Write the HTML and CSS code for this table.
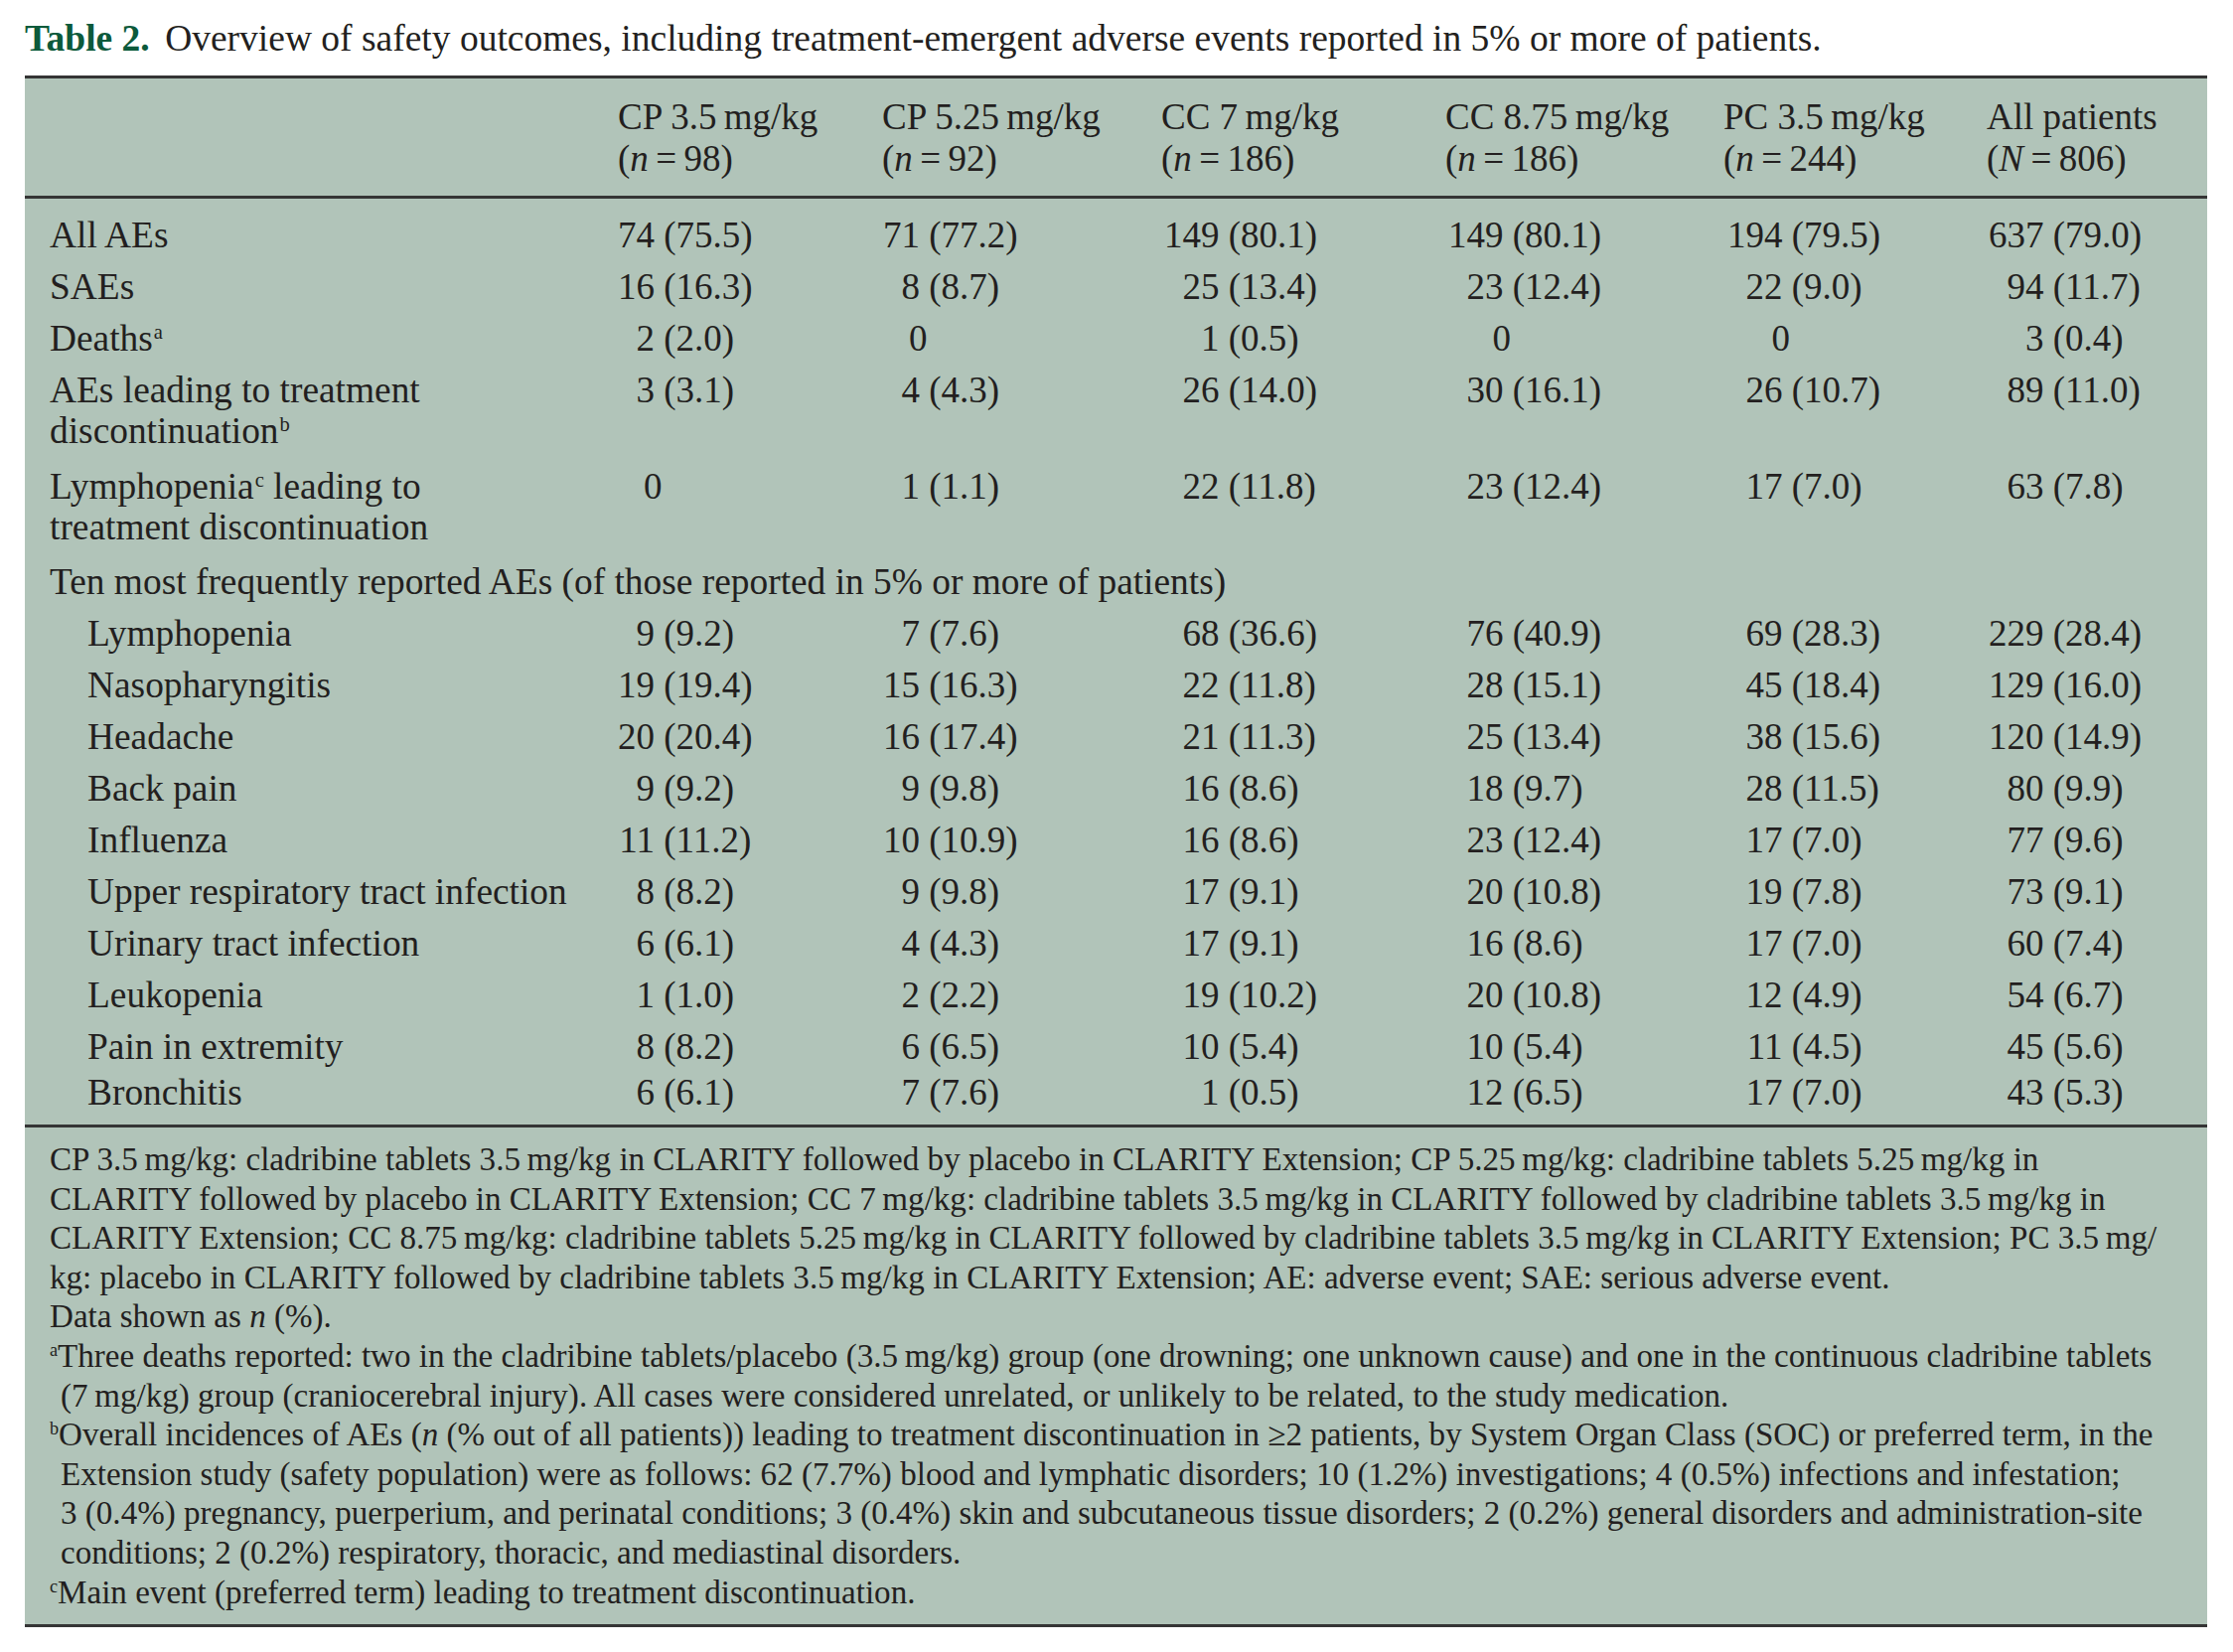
FILE: index.html
```html
<!DOCTYPE html>
<html lang="en">
<head>
<meta charset="utf-8">
<title>Table 2. Overview of safety outcomes</title>
<link rel="stylesheet" href="styles.css">
</head>
<body>
<div class="page">
  <p class="caption"><span class="label">Table 2.</span> Overview of safety outcomes, including treatment-emergent adverse events reported in 5% or more of patients.</p>
  <div class="panel">
    <table class="safety">
      <colgroup>
        <col class="col-label">
        <col class="col-cp35">
        <col class="col-cp525">
        <col class="col-cc7">
        <col class="col-cc875">
        <col class="col-pc35">
        <col class="col-all">
      </colgroup>
      <thead>
        <tr>
          <th></th>
          <th>CP 3.5&thinsp;mg/kg<br>(<i>n</i>&thinsp;=&thinsp;98)</th>
          <th>CP 5.25&thinsp;mg/kg<br>(<i>n</i>&thinsp;=&thinsp;92)</th>
          <th>CC 7&thinsp;mg/kg<br>(<i>n</i>&thinsp;=&thinsp;186)</th>
          <th>CC 8.75&thinsp;mg/kg<br>(<i>n</i>&thinsp;=&thinsp;186)</th>
          <th>PC 3.5&thinsp;mg/kg<br>(<i>n</i>&thinsp;=&thinsp;244)</th>
          <th>All patients<br>(<i>N</i>&thinsp;=&thinsp;806)</th>
        </tr>
      </thead>
      <tbody>
        <tr class="first">
          <td class="lab">All AEs</td>
          <td class="v c2"><span class="n">74</span>(75.5)</td>
          <td class="v c3"><span class="n">71</span>(77.2)</td>
          <td class="v c4"><span class="n">149</span>(80.1)</td>
          <td class="v c5"><span class="n">149</span>(80.1)</td>
          <td class="v c6"><span class="n">194</span>(79.5)</td>
          <td class="v c7"><span class="n">637</span>(79.0)</td>
        </tr>
        <tr>
          <td class="lab">SAEs</td>
          <td class="v c2"><span class="n">16</span>(16.3)</td>
          <td class="v c3"><span class="n">8</span>(8.7)</td>
          <td class="v c4"><span class="n">25</span>(13.4)</td>
          <td class="v c5"><span class="n">23</span>(12.4)</td>
          <td class="v c6"><span class="n">22</span>(9.0)</td>
          <td class="v c7"><span class="n">94</span>(11.7)</td>
        </tr>
        <tr>
          <td class="lab">Deaths<span class="sup">a</span></td>
          <td class="v c2"><span class="n">2</span>(2.0)</td>
          <td class="v c3"><span class="n z">0</span></td>
          <td class="v c4"><span class="n">1</span>(0.5)</td>
          <td class="v c5"><span class="n z">0</span></td>
          <td class="v c6"><span class="n z">0</span></td>
          <td class="v c7"><span class="n">3</span>(0.4)</td>
        </tr>
        <tr class="gap">
          <td class="lab">AEs leading to treatment<br>discontinuation<span class="sup">b</span></td>
          <td class="v c2"><span class="n">3</span>(3.1)</td>
          <td class="v c3"><span class="n">4</span>(4.3)</td>
          <td class="v c4"><span class="n">26</span>(14.0)</td>
          <td class="v c5"><span class="n">30</span>(16.1)</td>
          <td class="v c6"><span class="n">26</span>(10.7)</td>
          <td class="v c7"><span class="n">89</span>(11.0)</td>
        </tr>
        <tr class="gap2">
          <td class="lab">Lymphopenia<span class="sup">c</span> leading to<br>treatment discontinuation</td>
          <td class="v c2"><span class="n z">0</span></td>
          <td class="v c3"><span class="n">1</span>(1.1)</td>
          <td class="v c4"><span class="n">22</span>(11.8)</td>
          <td class="v c5"><span class="n">23</span>(12.4)</td>
          <td class="v c6"><span class="n">17</span>(7.0)</td>
          <td class="v c7"><span class="n">63</span>(7.8)</td>
        </tr>
        <tr>
          <td class="lab span" colspan="7">Ten most frequently reported AEs (of those reported in 5% or more of patients)</td>
        </tr>
        <tr>
          <td class="lab sub">Lymphopenia</td>
          <td class="v c2"><span class="n">9</span>(9.2)</td>
          <td class="v c3"><span class="n">7</span>(7.6)</td>
          <td class="v c4"><span class="n">68</span>(36.6)</td>
          <td class="v c5"><span class="n">76</span>(40.9)</td>
          <td class="v c6"><span class="n">69</span>(28.3)</td>
          <td class="v c7"><span class="n">229</span>(28.4)</td>
        </tr>
        <tr>
          <td class="lab sub">Nasopharyngitis</td>
          <td class="v c2"><span class="n">19</span>(19.4)</td>
          <td class="v c3"><span class="n">15</span>(16.3)</td>
          <td class="v c4"><span class="n">22</span>(11.8)</td>
          <td class="v c5"><span class="n">28</span>(15.1)</td>
          <td class="v c6"><span class="n">45</span>(18.4)</td>
          <td class="v c7"><span class="n">129</span>(16.0)</td>
        </tr>
        <tr>
          <td class="lab sub">Headache</td>
          <td class="v c2"><span class="n">20</span>(20.4)</td>
          <td class="v c3"><span class="n">16</span>(17.4)</td>
          <td class="v c4"><span class="n">21</span>(11.3)</td>
          <td class="v c5"><span class="n">25</span>(13.4)</td>
          <td class="v c6"><span class="n">38</span>(15.6)</td>
          <td class="v c7"><span class="n">120</span>(14.9)</td>
        </tr>
        <tr>
          <td class="lab sub">Back pain</td>
          <td class="v c2"><span class="n">9</span>(9.2)</td>
          <td class="v c3"><span class="n">9</span>(9.8)</td>
          <td class="v c4"><span class="n">16</span>(8.6)</td>
          <td class="v c5"><span class="n">18</span>(9.7)</td>
          <td class="v c6"><span class="n">28</span>(11.5)</td>
          <td class="v c7"><span class="n">80</span>(9.9)</td>
        </tr>
        <tr>
          <td class="lab sub">Influenza</td>
          <td class="v c2"><span class="n">11</span>(11.2)</td>
          <td class="v c3"><span class="n">10</span>(10.9)</td>
          <td class="v c4"><span class="n">16</span>(8.6)</td>
          <td class="v c5"><span class="n">23</span>(12.4)</td>
          <td class="v c6"><span class="n">17</span>(7.0)</td>
          <td class="v c7"><span class="n">77</span>(9.6)</td>
        </tr>
        <tr>
          <td class="lab sub">Upper respiratory tract infection</td>
          <td class="v c2"><span class="n">8</span>(8.2)</td>
          <td class="v c3"><span class="n">9</span>(9.8)</td>
          <td class="v c4"><span class="n">17</span>(9.1)</td>
          <td class="v c5"><span class="n">20</span>(10.8)</td>
          <td class="v c6"><span class="n">19</span>(7.8)</td>
          <td class="v c7"><span class="n">73</span>(9.1)</td>
        </tr>
        <tr>
          <td class="lab sub">Urinary tract infection</td>
          <td class="v c2"><span class="n">6</span>(6.1)</td>
          <td class="v c3"><span class="n">4</span>(4.3)</td>
          <td class="v c4"><span class="n">17</span>(9.1)</td>
          <td class="v c5"><span class="n">16</span>(8.6)</td>
          <td class="v c6"><span class="n">17</span>(7.0)</td>
          <td class="v c7"><span class="n">60</span>(7.4)</td>
        </tr>
        <tr>
          <td class="lab sub">Leukopenia</td>
          <td class="v c2"><span class="n">1</span>(1.0)</td>
          <td class="v c3"><span class="n">2</span>(2.2)</td>
          <td class="v c4"><span class="n">19</span>(10.2)</td>
          <td class="v c5"><span class="n">20</span>(10.8)</td>
          <td class="v c6"><span class="n">12</span>(4.9)</td>
          <td class="v c7"><span class="n">54</span>(6.7)</td>
        </tr>
        <tr>
          <td class="lab sub">Pain in extremity</td>
          <td class="v c2"><span class="n">8</span>(8.2)</td>
          <td class="v c3"><span class="n">6</span>(6.5)</td>
          <td class="v c4"><span class="n">10</span>(5.4)</td>
          <td class="v c5"><span class="n">10</span>(5.4)</td>
          <td class="v c6"><span class="n">11</span>(4.5)</td>
          <td class="v c7"><span class="n">45</span>(5.6)</td>
        </tr>
        <tr class="last">
          <td class="lab sub">Bronchitis</td>
          <td class="v c2"><span class="n">6</span>(6.1)</td>
          <td class="v c3"><span class="n">7</span>(7.6)</td>
          <td class="v c4"><span class="n">1</span>(0.5)</td>
          <td class="v c5"><span class="n">12</span>(6.5)</td>
          <td class="v c6"><span class="n">17</span>(7.0)</td>
          <td class="v c7"><span class="n">43</span>(5.3)</td>
        </tr>
      </tbody>
    </table>
    <div class="notes">
      <p class="note">CP 3.5&thinsp;mg/kg: cladribine tablets 3.5&thinsp;mg/kg in CLARITY followed by placebo in CLARITY Extension; CP 5.25&thinsp;mg/kg: cladribine tablets 5.25&thinsp;mg/kg in<br>CLARITY followed by placebo in CLARITY Extension; CC 7&thinsp;mg/kg: cladribine tablets 3.5&thinsp;mg/kg in CLARITY followed by cladribine tablets 3.5&thinsp;mg/kg in<br>CLARITY Extension; CC 8.75&thinsp;mg/kg: cladribine tablets 5.25&thinsp;mg/kg in CLARITY followed by cladribine tablets 3.5&thinsp;mg/kg in CLARITY Extension; PC 3.5&thinsp;mg/<br>kg: placebo in CLARITY followed by cladribine tablets 3.5&thinsp;mg/kg in CLARITY Extension; AE: adverse event; SAE: serious adverse event.</p>
      <p class="note">Data shown as <i>n</i> (%).</p>
      <p class="note hang"><span class="sup">a</span>Three deaths reported: two in the cladribine tablets/placebo (3.5&thinsp;mg/kg) group (one drowning; one unknown cause) and one in the continuous cladribine tablets<br>(7&thinsp;mg/kg) group (craniocerebral injury). All cases were considered unrelated, or unlikely to be related, to the study medication.</p>
      <p class="note hang"><span class="sup">b</span>Overall incidences of AEs (<i>n</i> (% out of all patients)) leading to treatment discontinuation in &ge;2 patients, by System Organ Class (SOC) or preferred term, in the<br>Extension study (safety population) were as follows: 62 (7.7%) blood and lymphatic disorders; 10 (1.2%) investigations; 4 (0.5%) infections and infestation;<br>3 (0.4%) pregnancy, puerperium, and perinatal conditions; 3 (0.4%) skin and subcutaneous tissue disorders; 2 (0.2%) general disorders and administration-site<br>conditions; 2 (0.2%) respiratory, thoracic, and mediastinal disorders.</p>
      <p class="note hang"><span class="sup">c</span>Main event (preferred term) leading to treatment discontinuation.</p>
    </div>
  </div>
</div>
</body>
</html>
```

FILE: styles.css
```css
html, body {
  margin: 0;
  padding: 0;
  background: #ffffff;
}

body {
  color: #231f20;
  font-family: "Liberation Serif", "Times New Roman", serif;
}

.page {
  width: 2197px;
  padding: 18px 0 0 25px;
}

.caption {
  margin: 0;
  font-size: 37.5px;
  line-height: 42px;
  white-space: nowrap;
}

.caption .label {
  color: #0c5a3b;
  font-weight: bold;
  margin-right: 6px;
}

.panel {
  margin-top: 16px;
  background: #b1c4b9;
  border-top: 3px solid #353535;
  border-bottom: 3px solid #353535;
}

.safety {
  width: 100%;
  border-collapse: collapse;
  border-spacing: 0;
  table-layout: fixed;
  font-size: 37px;
}

.col-label { width: 597px; }
.col-cp35 { width: 266px; }
.col-cp525 { width: 281px; }
.col-cc7 { width: 286px; }
.col-cc875 { width: 280px; }
.col-pc35 { width: 265px; }
.col-all { width: 222px; }

.safety th {
  font-weight: normal;
  text-align: left;
  vertical-align: top;
  line-height: 42px;
  padding: 18px 0 16px 0;
  border-bottom: 3px solid #353535;
  white-space: nowrap;
}

.safety td {
  line-height: 41px;
  padding: 6px 0 5px 0;
  vertical-align: top;
  white-space: nowrap;
}

.safety td.lab {
  padding-left: 25px;
  font-size: 37.4px;
}

.safety td.lab.sub {
  padding-left: 63px;
}

.safety tr.first td { padding-top: 16px; }
.safety tr.gap td { padding-bottom: 9px; }
.safety tr.gap2 td { padding-bottom: 8px; }
.safety tr.last td { padding-top: 0; padding-bottom: 12px; }

.n {
  display: inline-block;
  text-align: right;
  padding-right: 0.25em;
}

.c2 .n, .c3 .n { width: 1em; }
.c4 .n, .c5 .n, .c6 .n, .c7 .n { width: 1.5em; }

.n.z {
  padding-right: 0;
  padding-left: 0.2em;
}

.safety td.c3 { padding-left: 1px; }
.safety td.c4 { padding-left: 3px; }
.safety td.c5 { padding-left: 3px; }
.safety td.c6 { padding-left: 4px; }
.safety td.c7 { padding-left: 2px; }

.sup {
  font-size: 0.55em;
  line-height: 1;
  vertical-align: 0.6em;
  margin-left: 1px;
}

.notes {
  border-top: 3px solid #353535;
  padding: 13px 0 12px 25px;
  font-size: 33.1px;
  line-height: 39.6px;
}

.note {
  margin: 0;
  white-space: nowrap;
}

.note .sup {
  margin-left: 0;
}

.note.hang {
  padding-left: 11px;
  text-indent: -11px;
}
```
